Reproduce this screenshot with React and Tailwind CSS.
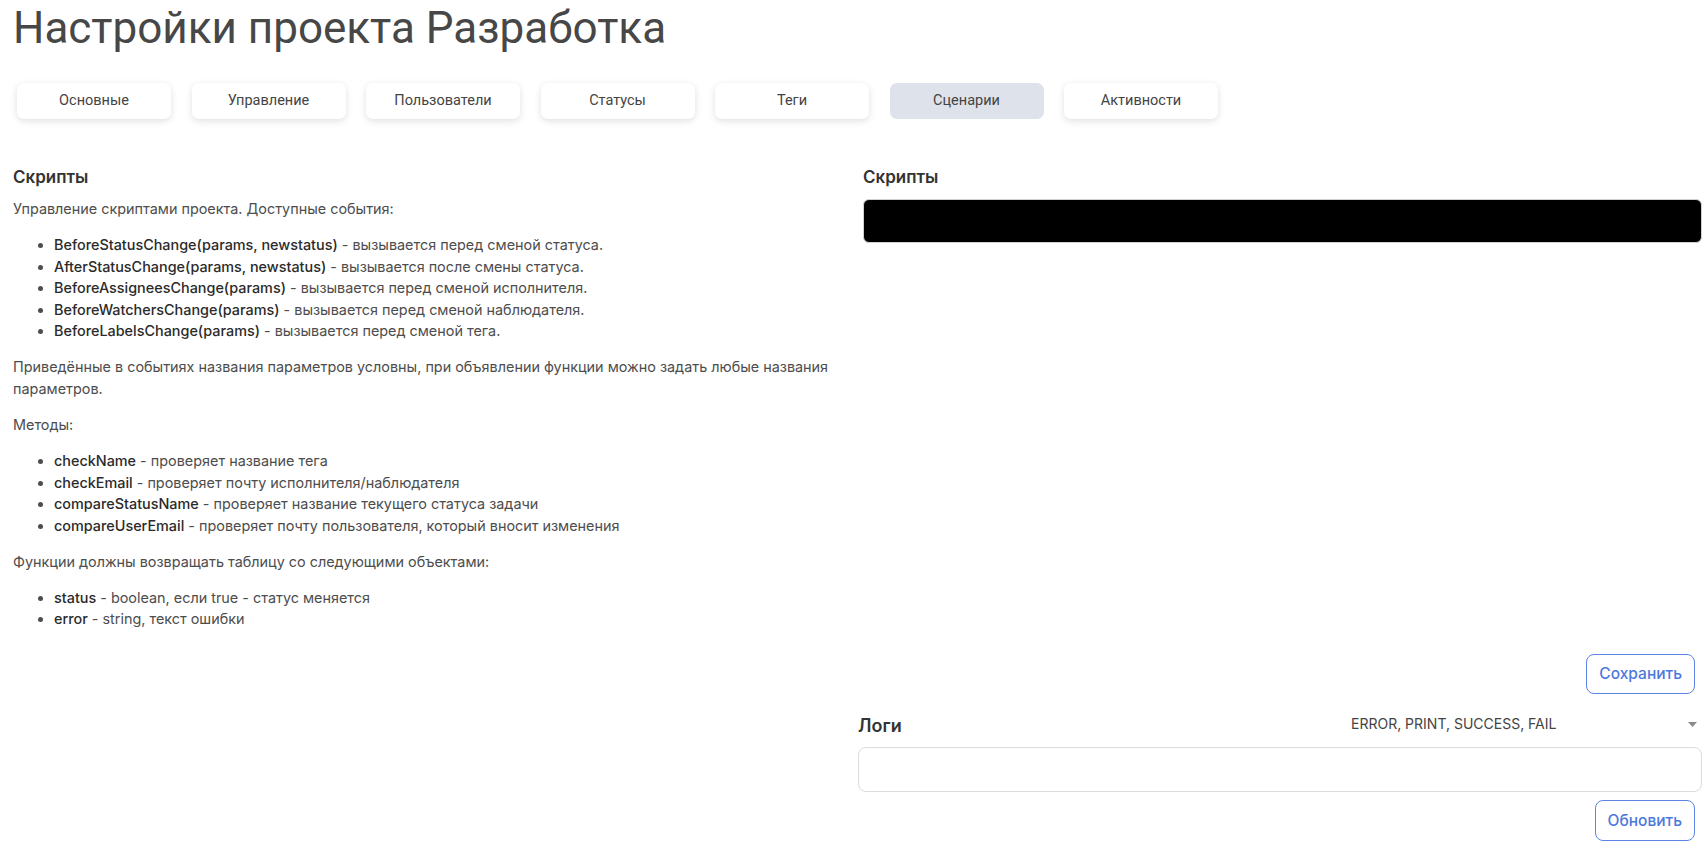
const tabs = [
  "Основные",
  "Управление",
  "Пользователи",
  "Статусы",
  "Теги",
  "Сценарии",
  "Активности",
];

const events = [
  ["BeforeStatusChange(params, newstatus)", "вызывается перед сменой статуса."],
  ["AfterStatusChange(params, newstatus)", "вызывается после смены статуса."],
  ["BeforeAssigneesChange(params)", "вызывается перед сменой исполнителя."],
  ["BeforeWatchersChange(params)", "вызывается перед сменой наблюдателя."],
  ["BeforeLabelsChange(params)", "вызывается перед сменой тега."],
];

const methods = [
  ["checkName", "проверяет название тега"],
  ["checkEmail", "проверяет почту исполнителя/наблюдателя"],
  ["compareStatusName", "проверяет название текущего статуса задачи"],
  ["compareUserEmail", "проверяет почту пользователя, который вносит изменения"],
];

const returns = [
  ["status", "boolean, если true - статус меняется"],
  ["error", "string, текст ошибки"],
];

function Bullets({ items }) {
  return (
    <ul className="list-disc pl-[41px] mb-[14.4px]">
      {items.map(([name, text]) => (
        <li key={name}>
          <span className="font-medium text-[#2b2b2b]">{name}</span> - {text}
        </li>
      ))}
    </ul>
  );
}

export default function App() {
  return (
    <div className="min-h-screen bg-white text-[#4d4d4d] font-['Inter','Noto_Sans',sans-serif]">
      <div className="pl-[13px] pr-[4px]">
        {/* Title */}
        <h1 className="mt-[2px] text-[44px] leading-[52px] font-normal text-[#474747] font-['Roboto',sans-serif]">
          Настройки проекта Разработка
        </h1>

        {/* Tabs */}
        <div className="flex gap-[20.5px] ml-[4px] mt-[29px]">
          {tabs.map((t) => (
            <button
              key={t}
              className={`w-[154px] h-[36px] rounded-[7px] text-[14.5px] text-[#444] font-['Roboto',sans-serif] shadow-[0_2px_7px_rgba(0,0,0,0.13)] ${
                t === "Сценарии" ? "bg-[#dee2ea] shadow-none" : "bg-white"
              }`}
            >
              {t}
            </button>
          ))}
        </div>

        <div className="flex mt-[46px]">
          {/* Left column */}
          <div className="w-[827px] shrink-0 text-[14.4px] leading-[21.6px]">
            <h2 className="text-[17px] leading-[24px] font-semibold text-[#333] mb-[9px]">
              Скрипты
            </h2>
            <p className="mb-[14.4px]">
              Управление скриптами проекта. Доступные события:
            </p>
            <Bullets items={events} />
            <p className="mb-[14.4px]">
              <span className="whitespace-nowrap">
                Приведённые в событиях названия параметров условны, при объявлении функции можно задать любые названия
              </span>
              <br />
              параметров.
            </p>
            <p className="mb-[14.4px]">Методы:</p>
            <Bullets items={methods} />
            <p className="mb-[14.4px]">
              Функции должны возвращать таблицу со следующими объектами:
            </p>
            <Bullets items={returns} />
          </div>

          {/* Right column */}
          <div className="ml-[18px] w-[844px] flex flex-col">
            <div className="pl-[5px]">
              <h2 className="text-[17px] leading-[24px] font-semibold text-[#333]">
                Скрипты
              </h2>
              <div className="mt-[10px] h-[44px] rounded-[6px] bg-black border border-[#d0d0d0]" />
              <div className="h-[411px]" />
              <div className="flex justify-end pr-[7px]">
                <button className="h-[40px] px-[12px] rounded-[8px] border border-[#5b84e4] text-[#4d78dc] text-[15.5px] font-medium bg-white">
                  Сохранить
                </button>
              </div>
            </div>

            <div className="flex items-center mt-[19px]">
              <h2 className="text-[18px] leading-[24px] font-semibold text-[#333]">
                Логи
              </h2>
              <div className="ml-auto w-[356px] flex items-center justify-between pl-[5px] pr-[5px] mb-[4px] text-[14px] text-[#444]">
                <span>ERROR, PRINT, SUCCESS, FAIL</span>
                <svg width="9" height="5" viewBox="0 0 9 5" className="mt-[2px]">
                  <path d="M0 0 L9 0 L4.5 5 Z" fill="#8a8a8a" />
                </svg>
              </div>
            </div>
            <div className="mt-[9px] h-[45px] rounded-[8px] border border-[#dcdcdc] bg-white" />
            <div className="flex justify-end pr-[7px] mt-[8px]">
              <button className="h-[41px] px-[12px] rounded-[8px] border border-[#5b84e4] text-[#4d78dc] text-[15.5px] font-medium bg-white">
                Обновить
              </button>
            </div>
          </div>
        </div>
      </div>
    </div>
  );
}
